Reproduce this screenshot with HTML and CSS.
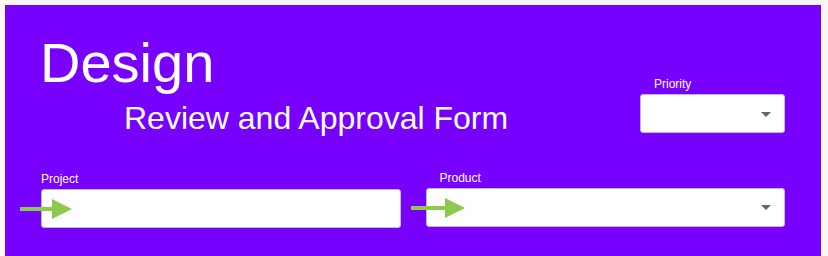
FILE: index.html
```html
<!DOCTYPE html>
<html lang="en">
<head>
<meta charset="utf-8">
<title>Design Review and Approval Form</title>
<link rel="stylesheet" href="styles.css">
</head>
<body>
<div class="panel">
  <div class="header">
    <div class="titles">
      <h1 class="title">Design</h1>
      <h2 class="subtitle">Review and Approval Form</h2>
    </div>
    <div class="field field-priority">
      <label class="label label-indent">Priority</label>
      <div class="box select"><span class="caret"></span></div>
    </div>
  </div>
  <div class="fields">
    <div class="field">
      <label class="label">Project</label>
      <div class="box"></div>
    </div>
    <div class="field field-product">
      <label class="label label-indent">Product</label>
      <div class="box select"><span class="caret"></span></div>
    </div>
  </div>
  <svg class="arrow arrow-project" width="52" height="20" viewBox="0 0 52 20"><rect x="0" y="8" width="33" height="4"/><polygon points="32,0 52,10 32,20"/></svg>
  <svg class="arrow arrow-product" width="54" height="20" viewBox="0 0 54 20"><rect x="0" y="8" width="35" height="4"/><polygon points="34,0 54,10 34,20"/></svg>
</div>
</body>
</html>
```
FILE: styles.css
```css
html, body {
  margin: 0;
  padding: 0;
  background: #f8f8f8;
  overflow: hidden;
}
body {
  font-family: "Liberation Sans", Arial, sans-serif;
  color: #ffffff;
}
.panel {
  position: relative;
  margin: 5px 7px 0 5px;
  height: 251px;
  background: #7700ff;
  padding: 30px 36px 0 36px;
  box-sizing: border-box;
}
.header {
  display: flex;
  justify-content: space-between;
  align-items: flex-end;
}
.titles {
  display: flex;
  flex-direction: column;
}
.title {
  margin: 0 0 0 -1px;
  font-size: 56px;
  line-height: 56px;
  font-weight: normal;
}
.subtitle {
  margin: 11px 0 0 83px;
  font-size: 32px;
  line-height: 32px;
  font-weight: normal;
}
.field {
  display: flex;
  flex-direction: column;
}
.field-priority {
  width: 145px;
  margin-bottom: 1px;
}
.label {
  font-size: 12px;
  line-height: 14px;
  margin-bottom: 2.6px;
}
.label-indent {
  padding-left: 14px;
}
.box {
  height: 39px;
  box-sizing: border-box;
  background: #ffffff;
  border: 1px solid #bdbdbd;
  border-radius: 3px;
}
.select {
  display: flex;
  justify-content: flex-end;
  align-items: center;
  padding-right: 13px;
}
.caret {
  width: 0;
  height: 0;
  border-left: 5px solid transparent;
  border-right: 5px solid transparent;
  border-top: 5px solid #666666;
  margin-top: 1px;
}
.fields {
  display: grid;
  grid-template-columns: 1fr 1fr;
  column-gap: 25px;
  margin-top: 38px;
}
.field-product {
  margin-top: -1px;
}
.arrow {
  position: absolute;
  fill: #8dc94b;
}
.arrow-project {
  left: 15px;
  top: 194px;
}
.arrow-product {
  left: 406px;
  top: 193px;
}
```
